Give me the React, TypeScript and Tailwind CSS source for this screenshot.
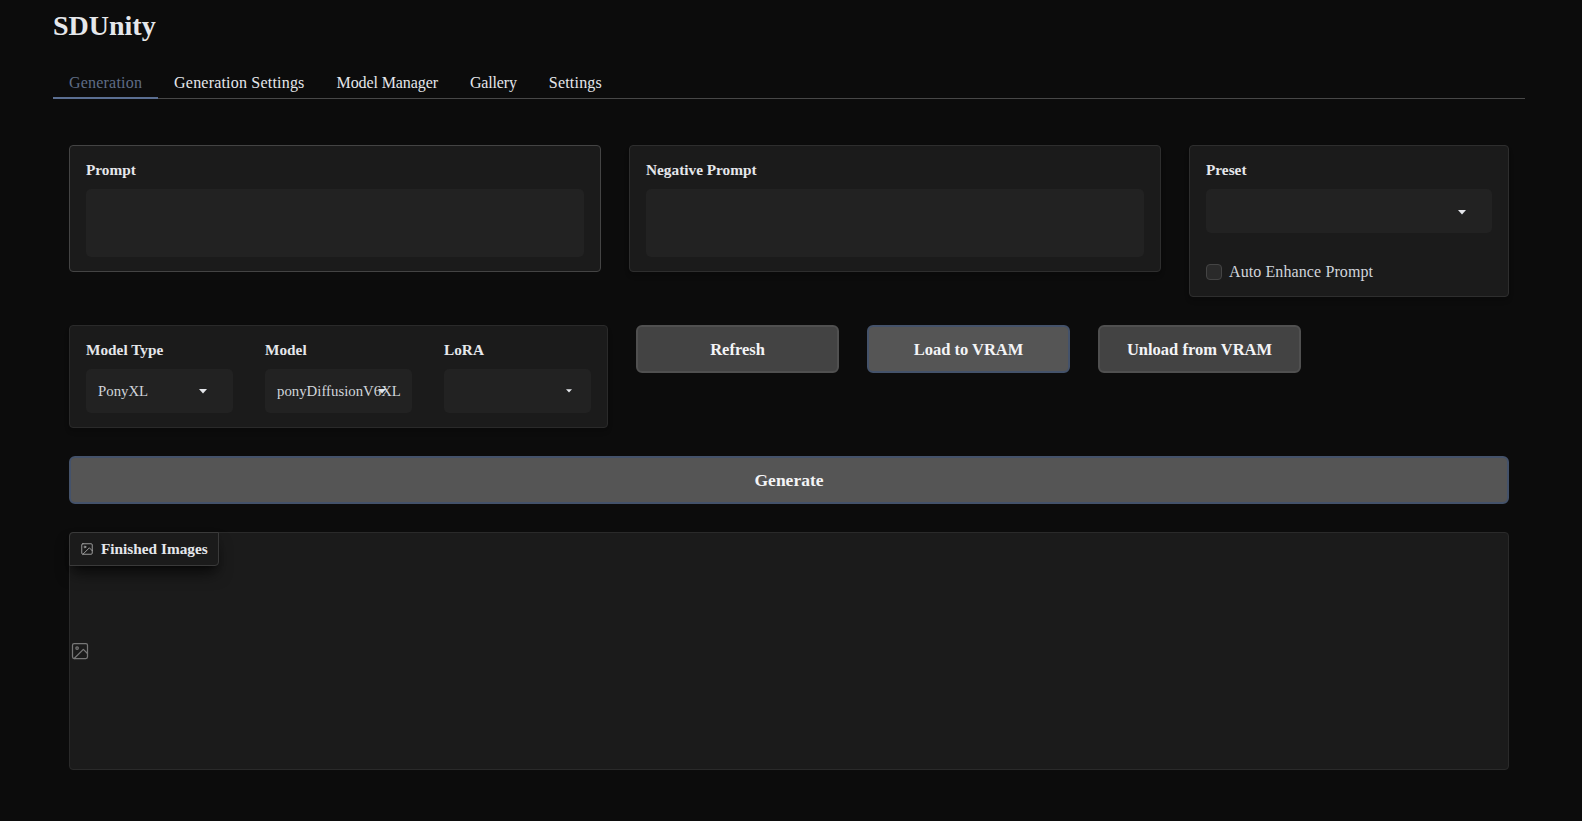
const tabs = [
  { label: "Generation", cls: "border-b-2 border-[#5b6f92] pt-[4px] tracking-[0.2px] text-[#5f6d86]" },
  { label: "Generation Settings", cls: "pt-[2px] tracking-[0.2px] text-[#e5e7eb]" },
  { label: "Model Manager", cls: "pt-[2px] tracking-[-0.1px] text-[#e5e7eb]" },
  { label: "Gallery", cls: "pt-[2px] tracking-[-0.15px] text-[#e5e7eb]" },
  { label: "Settings", cls: "pt-[2px] tracking-[0.2px] text-[#e5e7eb]" },
];

function Caret({ className = "", small = false }: { className?: string; small?: boolean }) {
  return (
    <svg width={small ? 6 : 8} height={small ? 4 : 5} viewBox="0 0 8 5" className={className}>
      <path d="M0 0h8L4 4.6z" fill="#e5e7eb" />
    </svg>
  );
}

function PictureIcon({ size, className = "" }: { size: number; className?: string }) {
  return (
    <svg
      width={size}
      height={size}
      viewBox="0 0 24 24"
      fill="none"
      stroke="currentColor"
      strokeWidth="1.5"
      strokeLinecap="round"
      strokeLinejoin="round"
      className={className}
    >
      <rect x="3" y="3" width="18" height="18" rx="2" ry="2" />
      <circle cx="8.5" cy="8.5" r="1.5" />
      <polyline points="21 15 16 10 5 21" />
    </svg>
  );
}

function TextBox({ label, className = "" }: { label: string; className?: string }) {
  return (
    <div className={`flex-1 rounded-[4px] border bg-[#1b1b1b] px-4 pt-[14px] pb-[14px] ${className}`}>
      <div className="mb-[9px] h-[20px] text-[15.3px] leading-[20px] font-bold text-[#e5e7eb]">{label}</div>
      <div className="h-[68px] rounded-[5px] bg-[#222222]" />
    </div>
  );
}

function Dropdown({ label, value, small }: { label: string; value?: string; small?: boolean }) {
  return (
    <div className="w-[147px]">
      <div className="mb-[9px] h-[20px] text-[15.3px] leading-[20px] font-bold text-[#e5e7eb]">{label}</div>
      <div className="relative flex h-[44px] items-center rounded-[5px] bg-[#222222] pl-3 text-[14.8px] text-[#d1d5db]">
        <span className="whitespace-nowrap">{value}</span>
        <Caret small={small} className={small ? "absolute right-[19px] top-[20px]" : "absolute left-[113px] top-[20px]"} />
      </div>
    </div>
  );
}

function ActionButton({ label, accent }: { label: string; accent?: boolean }) {
  return (
    <button
      className={`h-[48px] w-[203px] rounded-[6px] border-2 pt-[2px] text-[16.5px] font-bold text-[#f3f4f6] ${
        accent ? "border-[#44526a] bg-[#555555]" : "border-[#505050] bg-[#434343]"
      }`}
    >
      {label}
    </button>
  );
}

export default function App() {
  return (
    <div
      className="min-h-[821px] bg-[#0c0c0c] pt-[9px] pr-[57px] pl-[53px] text-[#e5e7eb]"
      style={{ fontFamily: '"Liberation Serif", serif' }}
    >
      <h1 className="h-[34px] text-[28px] leading-[34px] font-bold text-[#e5e7eb]">SDUnity</h1>

      <div className="mt-[22px] flex h-[34px] border-b border-[#484848]">
        {tabs.map((t) => (
          <div key={t.label} className={`flex h-[34px] items-center px-4 text-[16px] ${t.cls}`}>
            {t.label}
          </div>
        ))}
      </div>

      <div className="px-4 pt-[46px]">
        <div className="flex items-start gap-[28px]">
          <TextBox label="Prompt" className="border-[#444444]" />
          <TextBox label="Negative Prompt" className="border-[#2e2e2e] shadow-md" />
          <div className="w-[320px] rounded-[4px] border border-[#2e2e2e] bg-[#1b1b1b] px-4 pt-[14px] pb-[16px] shadow-md">
            <div className="mb-[9px] h-[20px] text-[15.3px] leading-[20px] font-bold">Preset</div>
            <div className="relative h-[44px] rounded-[5px] bg-[#222222]">
              <Caret className="absolute right-[26px] top-[21px]" />
            </div>
            <label className="mt-[31px] flex h-[16px] items-center gap-[7px] text-[16px] tracking-[0.1px] text-[#d1d5db]">
              <span className="h-4 w-4 rounded-[4px] border border-[#444444] bg-[#2a2a2a]" />
              Auto Enhance Prompt
            </label>
          </div>
        </div>

        <div className="mt-[28px] flex items-start gap-[28px]">
          <div className="flex w-[539px] gap-[32px] rounded-[4px] border border-[#2a2a2a] bg-[#1b1b1b] px-4 pt-[14px] pb-[14px] shadow-md">
            <Dropdown label="Model Type" value="PonyXL" />
            <Dropdown label="Model" value="ponyDiffusionV6XL" />
            <Dropdown label="LoRA" small />
          </div>
          <ActionButton label="Refresh" />
          <ActionButton label="Load to VRAM" accent />
          <ActionButton label="Unload from VRAM" />
        </div>

        <button className="mt-[28px] h-[48px] w-full rounded-[6px] border-2 border-[#44526a] bg-[#555555] pt-[1px] text-[17.5px] font-bold text-[#f3f4f6]">
          Generate
        </button>

        <div className="relative mt-[28px] flex h-[238px] items-center rounded-[4px] border border-[#2a2a2a] bg-[#1b1b1b]">
          <div className="absolute -top-px -left-px flex h-[34px] w-[150px] items-center gap-[7px] rounded-tl-[4px] rounded-br-[4px] border border-[#3a3a3a] bg-[#1b1b1b] pl-[10px] text-[15.3px] font-bold shadow-lg shadow-black/60">
            <PictureIcon size={14} className="text-[#aaaaaa]" />
            Finished Images
          </div>
          <PictureIcon size={20} className="text-[#777777]" />
        </div>
      </div>
    </div>
  );
}
